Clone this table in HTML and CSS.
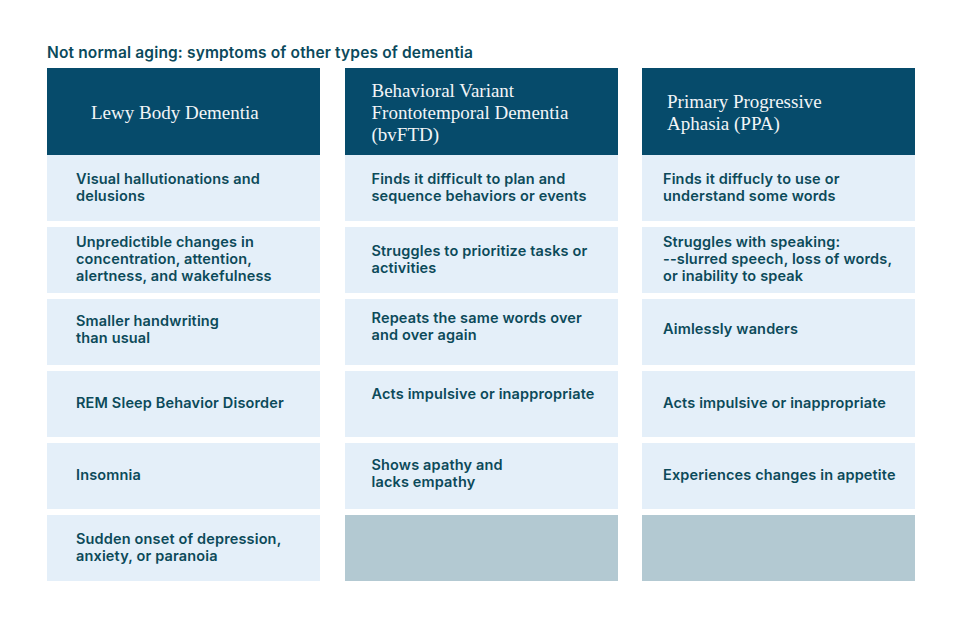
FILE: index.html
```html
<!DOCTYPE html>
<html lang="en">
<head>
<meta charset="utf-8">
<title>Not normal aging</title>
<link rel="stylesheet" href="styles.css">
</head>
<body>
<main class="page">
  <h1 class="title">Not normal aging: symptoms of other types of dementia</h1>
  <div class="table">
    <section class="col col-lewy">
      <div class="head">Lewy Body Dementia</div>
      <div class="cell">Visual hallutionations and<br>delusions</div>
      <div class="cell">Unpredictible changes in<br>concentration, attention,<br>alertness, and wakefulness</div>
      <div class="cell lift">Smaller handwriting<br>than usual</div>
      <div class="cell">REM Sleep Behavior Disorder</div>
      <div class="cell">Insomnia</div>
      <div class="cell">Sudden onset of depression,<br>anxiety, or paranoia</div>
    </section>
    <section class="col col-ftd">
      <div class="head">Behavioral Variant<br>Frontotemporal Dementia<br>(bvFTD)</div>
      <div class="cell">Finds it difficult to plan and<br>sequence behaviors or events</div>
      <div class="cell">Struggles to prioritize tasks or<br>activities</div>
      <div class="cell lift2">Repeats the same words over<br>and over again</div>
      <div class="cell lift3">Acts impulsive or inappropriate</div>
      <div class="cell lift">Shows apathy and<br>lacks empathy</div>
      <div class="cell empty"></div>
    </section>
    <section class="col col-ppa">
      <div class="head">Primary Progressive<br>Aphasia (PPA)</div>
      <div class="cell">Finds it diffucly to use or<br>understand some words</div>
      <div class="cell">Struggles with speaking:<br>--slurred speech, loss of words,<br>or inability to speak</div>
      <div class="cell lift">Aimlessly wanders</div>
      <div class="cell">Acts impulsive or inappropriate</div>
      <div class="cell">Experiences changes in appetite</div>
      <div class="cell empty"></div>
    </section>
  </div>
</main>
</body>
</html>
```

FILE: styles.css
```css
* { box-sizing: border-box; }
html, body { margin: 0; padding: 0; background: #ffffff; }
body { width: 960px; height: 640px; overflow: hidden; }

.page {
  padding: 44px 45px 0 47px;
}

.title {
  margin: 0 0 6px 0;
  font-family: Inter, "Open Sans", sans-serif;
  font-weight: 600;
  font-size: 15.5px;
  line-height: 18px;
  color: #0b4a5c;
  letter-spacing: 0.15px;
}

.table {
  display: grid;
  grid-template-columns: 273px 273px 273px;
  column-gap: 24.5px;
}

.col {
  display: flex;
  flex-direction: column;
  gap: 6px;
}

.head {
  height: 87px;
  margin-bottom: -6px;
  background: #064b6b;
  color: #f2f5f7;
  font-family: "Liberation Serif", "DejaVu Serif", serif;
  font-size: 19px;
  line-height: 22px;
  display: flex;
  align-items: center;
  padding-top: 2px;
}

.cell {
  height: 66px;
  background: #e4eff9;
  color: #0c4a5a;
  font-family: Inter, "Open Sans", sans-serif;
  font-weight: 600;
  font-size: 14.5px;
  letter-spacing: 0.15px;
  line-height: 17px;
  display: flex;
  align-items: center;
  padding-bottom: 3px;
}

.cell.lift { padding-bottom: 7px; }
.cell.lift2 { padding-bottom: 12px; }
.cell.lift3 { padding-bottom: 22px; }

.cell.empty { background: #b3c9d2; }

.col-lewy .head { padding-left: 44px; }
.col-lewy .cell { padding-left: 29px; }
.col-ftd .head { padding-left: 27px; }
.col-ftd .cell { padding-left: 27px; }
.col-ppa .head { padding-left: 25px; }
.col-ppa .cell { padding-left: 21px; }
```
